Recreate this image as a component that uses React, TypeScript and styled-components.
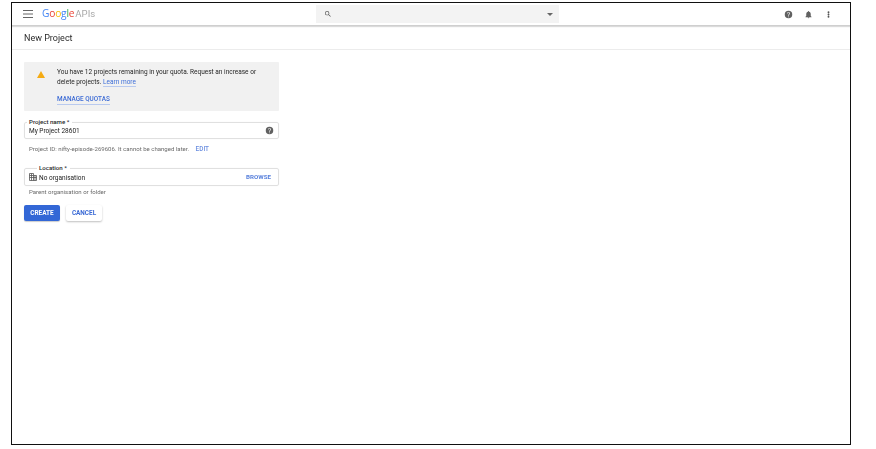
import React from "react";
import styled, { createGlobalStyle, css } from "styled-components";

const Global = createGlobalStyle`
  html, body { margin: 0; padding: 0; background: #fff; }
  body { font-family: Roboto, "Liberation Sans", sans-serif; width: 876px; height: 449px; overflow: hidden; }
`;
const soft = css`
  filter: blur(0.4px);
`;
const Frame = styled.div`
  box-sizing: border-box;
  width: 840px;
  height: 443px;
  margin: 2px 0 0 11px;
  border: 1px solid #111;
  background: #fff;
  display: flex;
  flex-direction: column;
`;
const TopBar = styled.header`
  ${soft}
  height: 22px;
  flex: none;
  display: flex;
  align-items: center;
  position: relative;
  border-bottom: 1px solid #cfcfcf;
  box-shadow: 0 1px 1px rgba(0, 0, 0, 0.14);
  padding-left: 11px;
`;
const IconSlot = styled.div`
  display: flex;
  align-items: center;
  justify-content: center;
`;
const Logo = styled.div`
  margin-left: 9px;
  margin-top: -2px;
  width: 274px;
  font-size: 10.2px;
  letter-spacing: -0.2px;
  font-family: "Open Sans", Roboto, sans-serif;
  white-space: nowrap;
  line-height: 1;
`;
const Letter = styled.span<{ $c: string }>`
  color: ${(p) => p.$c};
`;
const Apis = styled.span`
  color: #a9a9a9;
  margin-left: 1px;
  font-family: Roboto, sans-serif;
  font-size: 9.6px;
  letter-spacing: 0;
`;
const Search = styled.div`
  width: 243px;
  height: 18px;
  background: #f3f3f3;
  display: flex;
  align-items: center;
  justify-content: space-between;
  padding: 0 6px 0 8px;
  box-sizing: border-box;
`;
const Actions = styled.div`
  margin-left: auto;
  margin-right: 17px;
  display: flex;
  align-items: center;
  gap: 11px;
`;
const SubBar = styled.div`
  ${soft}
  height: 22px;
  flex: none;
  margin-top: 1px;
  border-bottom: 1px solid #ececec;
  display: flex;
  align-items: center;
  padding-left: 12px;
  font-size: 9px;
  color: #2b2b2b;
`;
const Content = styled.main`
  ${soft}
  width: 255px;
  margin: 12px 0 0 12px;
  display: flex;
  flex-direction: column;
  font-size: 6.5px;
  color: #333;
`;
const Notice = styled.section`
  box-sizing: border-box;
  height: 49px;
  background: #f1f1f1;
  border-radius: 1px;
  display: flex;
  padding: 5px 10px 0 13px;
`;
const NoticeIcon = styled.div`
  width: 20px;
  flex: none;
  padding-top: 4px;
`;
const NoticeBody = styled.div`
  line-height: 10px;
  color: #262626;
`;
const NoticeLine = styled.div`
  white-space: nowrap;
`;
const Link = styled.a`
  color: #3f6fd8;
  border-bottom: 1px solid #b9caef;
`;
const QuotaLink = styled.a`
  display: inline-block;
  margin-top: 8px;
  color: #3b6ad5;
  font-weight: 500;
  font-size: 6.4px;
  line-height: 9px;
  border-bottom: 1px solid #b9caef;
`;
const Field = styled.div<{ $top: number; $h: number }>`
  position: relative;
  box-sizing: border-box;
  margin-top: ${(p) => p.$top}px;
  height: ${(p) => p.$h}px;
  border: 1px solid #e0e0e0;
  border-radius: 2px;
  box-shadow: 0 0 1px rgba(0, 0, 0, 0.08);
  display: flex;
  align-items: center;
  padding: 0 4px;
  color: #222;
  font-size: 6.5px;
`;
const Legend = styled.span<{ $left: number }>`
  position: absolute;
  left: ${(p) => p.$left}px;
  top: -5px;
  background: #fff;
  padding: 0 3px 0 2px;
  font-size: 6.1px;
  line-height: 7px;
  color: #2a2a2a;
  font-weight: 500;
`;
const Value = styled.span<{ $gap?: number }>`
  flex: 1;
  margin-top: 1px;
  margin-left: ${(p) => p.$gap ?? 0}px;
`;
const Helper = styled.div<{ $top: number }>`
  margin-top: ${(p) => p.$top}px;
  margin-left: 5px;
  color: #6a6a6a;
  font-size: 6.05px;
  line-height: 8px;
  white-space: nowrap;
`;
const Edit = styled.span`
  color: #6b8fe0;
  margin-left: 5px;
  font-size: 6.4px;
  font-weight: 500;
`;
const Browse = styled.span`
  color: #5a82dc;
  font-size: 6.2px;
  font-weight: 700;
  margin-right: 3px;
`;
const Buttons = styled.div`
  display: flex;
  gap: 6px;
  margin-top: 9px;
`;
const Primary = styled.button`
  width: 36px;
  height: 16px;
  border: 0;
  padding: 0;
  border-radius: 2px;
  background: #3367d6;
  color: #fff;
  font: 700 6.4px Roboto, sans-serif;
  box-shadow: 0 1px 1px rgba(0, 0, 0, 0.2);
`;
const Secondary = styled.button`
  width: 36px;
  height: 16px;
  border: 0;
  padding: 0;
  border-radius: 2px;
  background: #fff;
  color: #3b6ad5;
  font: 700 6.4px Roboto, sans-serif;
  box-shadow: 0 1px 2px rgba(0, 0, 0, 0.25);
`;

const Menu = () => (
  <svg width="10" height="8" viewBox="0 0 10 8" fill="#666"><path d="M0 0h10v1H0zM0 3.5h10v1H0zM0 7h10v1H0z" /></svg>
);
const SearchIcon = () => (
  <svg width="8" height="8" viewBox="0 0 24 24" fill="#555"><path d="M15.5 14h-.79l-.28-.27A6.47 6.47 0 0 0 16 9.5 6.5 6.5 0 1 0 9.5 16c1.61 0 3.09-.59 4.23-1.57l.27.28v.79l5 4.99L20.49 19l-4.99-5zm-6 0C7.01 14 5 11.99 5 9.5S7.01 5 9.5 5 14 7.01 14 9.5 11.99 14 9.5 14z" /></svg>
);
const Caret = () => (
  <svg width="6" height="3" viewBox="0 0 6 3" fill="#666"><path d="M0 0h6L3 3z" /></svg>
);
const Help = ({ size }: { size: number }) => (
  <svg width={size} height={size} viewBox="0 0 24 24" fill="#616161"><path d="M12 2a10 10 0 1 0 0 20 10 10 0 0 0 0-20zm1 17h-2v-2h2v2zm2.07-7.75-.9.92C13.45 12.9 13 13.5 13 15h-2v-.5c0-1.1.45-2.1 1.17-2.83l1.24-1.26A2 2 0 1 0 10 9H8a4 4 0 1 1 8 0c0 .88-.36 1.68-.93 2.25z" /></svg>
);
const Bell = () => (
  <svg width="9" height="9" viewBox="0 0 24 24" fill="#616161"><path d="M12 22a2 2 0 0 0 2-2h-4a2 2 0 0 0 2 2zm6-6v-5c0-3.07-1.63-5.64-4.5-6.32V4a1.5 1.5 0 0 0-3 0v.68C7.64 5.36 6 7.92 6 11v5l-2 2v1h16v-1l-2-2z" /></svg>
);
const Dots = () => (
  <svg width="9" height="9" viewBox="0 0 24 24" fill="#555"><path d="M12 8.5a2.5 2.5 0 1 0 0-5 2.5 2.5 0 0 0 0 5zm0 1a2.5 2.5 0 1 0 0 5 2.5 2.5 0 0 0 0-5zm0 6a2.5 2.5 0 1 0 0 5 2.5 2.5 0 0 0 0-5z" /></svg>
);
const Warning = () => (
  <svg width="8" height="7" viewBox="0 0 8 7" fill="#f5ab13"><path d="M4 0l4 7H0z" /></svg>
);
const Building = () => (
  <svg width="8" height="8" viewBox="0 0 8 8" fill="none" stroke="#555" strokeWidth="0.8"><path d="M.5 7.5V.5h4v7M4.5 2.5h3v5h-7M2.5.5v7M.5 2.5h4M.5 4.5h7M6 2.5v5" /></svg>
);

const google: [string, string][] = [
  ["G", "#4285f4"], ["o", "#ea4335"], ["o", "#fbbc05"], ["g", "#4285f4"], ["l", "#34a853"], ["e", "#ea4335"],
];

export default function App() {
  return (
    <>
      <Global />
      <Frame>
        <TopBar>
          <IconSlot><Menu /></IconSlot>
          <Logo>
            {google.map(([l, c], i) => <Letter key={i} $c={c}>{l}</Letter>)}
            <Apis>APIs</Apis>
          </Logo>
          <Search><SearchIcon /><Caret /></Search>
          <Actions>
            <IconSlot><Help size={9} /></IconSlot>
            <IconSlot><Bell /></IconSlot>
            <IconSlot><Dots /></IconSlot>
          </Actions>
        </TopBar>
        <SubBar>New Project</SubBar>
        <Content>
          <Notice>
            <NoticeIcon><Warning /></NoticeIcon>
            <NoticeBody>
              <NoticeLine>You have 12 projects remaining in your quota. Request an increase or</NoticeLine>
              <NoticeLine>delete projects. <Link>Learn more</Link></NoticeLine>
              <QuotaLink>MANAGE QUOTAS</QuotaLink>
            </NoticeBody>
          </Notice>
          <Field $top={11} $h={17}>
            <Legend $left={2}>Project name *</Legend>
            <Value>My Project 28601</Value>
            <Help size={9} />
          </Field>
          <Helper $top={6}>Project ID: nifty-episode-269606. It cannot be changed later. <Edit>EDIT</Edit></Helper>
          <Field $top={15} $h={18}>
            <Legend $left={12}>Location *</Legend>
            <Building />
            <Value $gap={2}>No organisation</Value>
            <Browse>BROWSE</Browse>
          </Field>
          <Helper $top={2}>Parent organisation or folder</Helper>
          <Buttons>
            <Primary>CREATE</Primary>
            <Secondary>CANCEL</Secondary>
          </Buttons>
        </Content>
      </Frame>
    </>
  );
}
